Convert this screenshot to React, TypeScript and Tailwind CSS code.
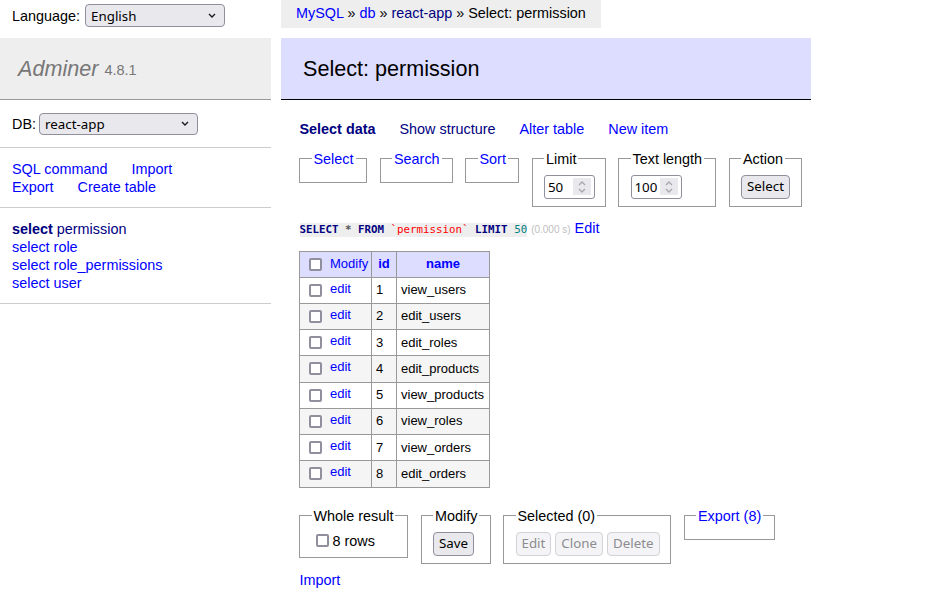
import React from 'react';

const rows = [
  { id: 1, name: 'view_users' },
  { id: 2, name: 'edit_users' },
  { id: 3, name: 'edit_roles' },
  { id: 4, name: 'edit_products' },
  { id: 5, name: 'view_products' },
  { id: 6, name: 'view_roles' },
  { id: 7, name: 'view_orders' },
  { id: 8, name: 'edit_orders' },
];

function Check() {
  return <span className="inline-block w-[13px] h-[13px] shrink-0 border-2 border-[#8f8f9d] rounded-[2px] bg-white" />;
}

function Chevron({ up = false, className = '' }: { up?: boolean; className?: string }) {
  return (
    <svg width="8" height="5" viewBox="0 0 8 5" className={className}>
      <path d={up ? 'M1 4 L4 1 L7 4' : 'M1 1 L4 4 L7 1'} fill="none" stroke="currentColor" strokeWidth="1.4" />
    </svg>
  );
}

function Select({ value, width, height }: { value: string; width: string; height: string }) {
  return (
    <div
      className={`${width} ${height} flex items-center justify-between pl-[5px] pr-[8px] bg-[#e9e9ed] border border-[#8f8f9d] rounded-[4px] text-[13.33px] font-['Noto_Sans',sans-serif] text-black`}
    >
      <span>{value}</span>
      <Chevron className="text-[#1b1b1b]" />
    </div>
  );
}

function NumberInput({ value }: { value: string }) {
  return (
    <div className="w-[51px] h-[24px] flex items-center justify-between pl-[3px] pr-[3px] border border-[#8f8f9d] rounded-[3px] bg-white text-[13.33px] font-['Noto_Sans',sans-serif]">
      <span>{value}</span>
      <div className="w-[18px] h-[17px] bg-[#e9e9ed] flex flex-col items-center justify-center gap-[2px] text-[#a8a8ae]">
        <Chevron up />
        <Chevron />
      </div>
    </div>
  );
}

function Button({ children, disabled = false }: { children: React.ReactNode; disabled?: boolean }) {
  return (
    <button
      className={`h-[24px] px-[5px] rounded-[4px] border text-[13.33px] font-['Noto_Sans',sans-serif] leading-none ${
        disabled ? 'bg-[#f4f4f6] border-[#d2d2d8] text-[#8c8c90]' : 'bg-[#e9e9ed] border-[#8f8f9d] text-black'
      }`}
    >
      {children}
    </button>
  );
}

function Fieldset({ legend, width, link = false, children }: { legend: string; width: string; link?: boolean; children?: React.ReactNode }) {
  return (
    <fieldset className={`${width} min-w-0 shrink-0 border border-[#999] pl-[11.5px] pr-[4px] pt-[7px] pb-[7px]`}>
      <legend className={`px-[2px] leading-[18px] whitespace-nowrap ${link ? 'text-[#0000ff]' : ''}`}>{legend}</legend>
      {children}
    </fieldset>
  );
}

export default function App() {
  return (
    <div className="flex w-[925px] min-h-[598px] bg-white text-black font-['Liberation_Sans',Arial,sans-serif] text-[14.4px] leading-[18px]">
      {/* side menu */}
      <aside className="w-[271px] shrink-0">
        <div className="h-[38px] pl-[12px]">
          <div className="h-[31px] flex items-center gap-[5px]">
            <span>Language:</span>
            <Select value="English" width="w-[140px]" height="h-[23px]" />
          </div>
        </div>
        <h1 className="h-[62px] flex items-center pl-[18px] bg-[#eee] border-b border-[#999] text-[21.6px] text-[#777]">
          <span className="italic">Adminer</span>
          <span className="ml-[6px] text-[14.5px] mt-[3px]">4.8.1</span>
        </h1>
        <div className="h-[48px] flex items-center gap-[3px] pl-[12px] border-b border-[#ccc]">
          <span>DB:</span>
          <Select value="react-app" width="w-[159px]" height="h-[22px]" />
        </div>
        <div className="px-[12px] py-[11.5px] border-b border-[#ccc] text-[#0000ff]">
          <div className="flex gap-[24px]">
            <a>SQL command</a>
            <a>Import</a>
          </div>
          <div className="flex gap-[24px]">
            <a>Export</a>
            <a>Create table</a>
          </div>
        </div>
        <ul className="px-[12px] py-[11.5px] border-b border-[#ccc] text-[#0000ff]">
          <li>
            <a className="font-bold text-[#000080]">select</a> <a className="text-[#000080]">permission</a>
          </li>
          <li>select role</li>
          <li>select role_permissions</li>
          <li>select user</li>
        </ul>
      </aside>

      {/* content */}
      <main className="ml-[10px] w-[530px]">
        <div className="w-[320px] h-[28px] bg-[#eee] pl-[15px] leading-[26px] whitespace-nowrap">
          <a className="text-[#0000ff]">MySQL</a> » <a className="text-[#0000ff]">db</a> » <a className="text-[#000080]">react-app</a> » Select: permission
        </div>
        <h2 className="mt-[10px] h-[62px] flex items-center pl-[22px] bg-[#ddf] border-b border-black text-[21.6px]">
          Select: permission
        </h2>

        <div className="pl-[18px]">
          <p className="mt-[20px] flex gap-[24px] pl-[0.5px]">
            <a className="font-bold text-[#000080]">Select data</a>
            <a className="text-[#000080]">Show structure</a>
            <a className="text-[#0000ff]">Alter table</a>
            <a className="text-[#0000ff]">New item</a>
          </p>

          <div className="mt-[11.5px] flex items-start gap-[12.5px]">
            <Fieldset legend="Select" width="w-[68px]" link />
            <Fieldset legend="Search" width="w-[73px]" link />
            <Fieldset legend="Sort" width="w-[54px]" link />
            <Fieldset legend="Limit" width="w-[74px]">
              <NumberInput value="50" />
            </Fieldset>
            <Fieldset legend="Text length" width="w-[98px]">
              <NumberInput value="100" />
            </Fieldset>
            <Fieldset legend="Action" width="w-[73px]">
              <Button>Select</Button>
            </Fieldset>
          </div>

          <p className="mt-[12px] flex items-baseline whitespace-nowrap pl-[0.5px]">
            <code className="bg-[#eee] font-['DejaVu_Sans_Mono',monospace] text-[10.8px] leading-[14px] whitespace-pre">
              <span className="font-bold text-[#000080]">SELECT</span>
              <span className="font-bold text-[#555]"> * </span>
              <span className="font-bold text-[#000080]">FROM</span>{' '}
              <span className="text-[#f00]">`permission`</span>{' '}
              <span className="font-bold text-[#000080]">LIMIT</span>{' '}
              <span className="text-[#007f7f]">50</span>
            </code>
            <span className="ml-[4px] text-[10px] text-[#c0c0c0]">(0.000 s)</span>
            <a className="ml-[4px] text-[#0000ff]">Edit</a>
          </p>

          <table className="mt-[12px] border-collapse text-[13px] leading-[16px]">
            <thead>
              <tr className="h-[26px] bg-[#ddf]">
                <td className="w-[72px] border border-[#999] pl-[9px]">
                  <div className="flex items-center gap-[8px]">
                    <Check />
                    <a className="text-[#0000ff]">Modify</a>
                  </div>
                </td>
                <th className="w-[25px] border border-[#999] text-center font-bold text-[#0000ff]">id</th>
                <th className="w-[93px] border border-[#999] text-center font-bold text-[#0000ff]">name</th>
              </tr>
            </thead>
            <tbody>
              {rows.map((r, i) => (
                <tr key={r.id} className={`h-[26.25px] ${i % 2 === 1 ? 'bg-[#f5f5f5]' : ''}`}>
                  <td className="border border-[#999] pl-[9px]">
                    <div className="flex items-center gap-[8px]">
                      <Check />
                      <a className="text-[#0000ff] -mt-[3px]">edit</a>
                    </div>
                  </td>
                  <td className="border border-[#999] pl-[4px]">{r.id}</td>
                  <td className="border border-[#999] pl-[4px] pr-[3px] whitespace-nowrap">{r.name}</td>
                </tr>
              ))}
            </tbody>
          </table>

          <div className="mt-[19px] flex items-start gap-[12.5px]">
            <Fieldset legend="Whole result" width="w-[109px]">
              <label className="flex items-center gap-[4px] pl-[4px]">
                <Check />
                <span>8 rows</span>
              </label>
            </Fieldset>
            <Fieldset legend="Modify" width="w-[70px]">
              <Button>Save</Button>
            </Fieldset>
            <Fieldset legend="Selected (0)" width="w-[168px]">
              <div className="flex gap-[4px]">
                <Button disabled>Edit</Button>
                <Button disabled>Clone</Button>
                <Button disabled>Delete</Button>
              </div>
            </Fieldset>
            <Fieldset legend="Export (8)" width="w-[91px]" link />
          </div>

          <p className="mt-[7px] pl-[0.5px]">
            <a className="text-[#0000ff]">Import</a>
          </p>
        </div>
      </main>
    </div>
  );
}
